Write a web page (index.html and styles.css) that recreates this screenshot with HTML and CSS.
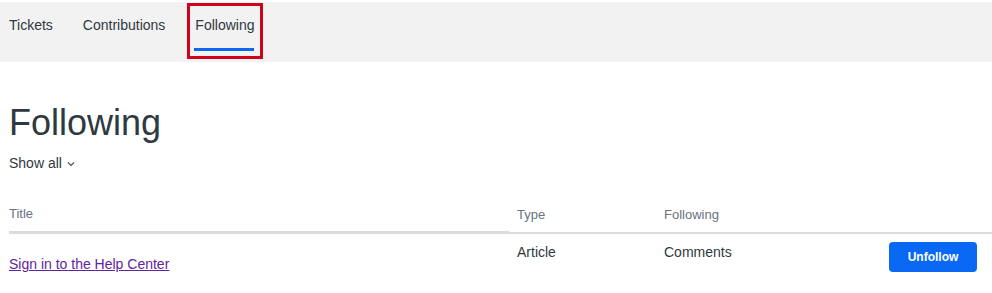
FILE: index.html
```html
<!DOCTYPE html>
<html lang="en">
<head>
  <meta charset="UTF-8" />
  <title>Following</title>
  <link rel="stylesheet" href="styles.css">
</head>
<body>

  <nav class="tabs-bar">
    <a class="tab" href="#">Tickets</a>
    <a class="tab" href="#">Contributions</a>
    <a class="tab tab-current" href="#">Following</a>
  </nav>

  <main class="content">
    <h1 class="page-title">Following</h1>

    <button class="filter-toggle">
      Show all
      <svg class="chevron" width="8" height="6" viewBox="0 0 8 6">
        <polyline points="1,1.5 4,4.5 7,1.5" fill="none" stroke="#49545c" stroke-width="1.2" />
      </svg>
    </button>

    <table class="follow-table">
      <thead>
        <tr>
          <th class="col-title">Title</th>
          <th class="col-type">Type</th>
          <th class="col-following">Following</th>
          <th class="col-action"></th>
        </tr>
      </thead>
      <tbody>
        <tr>
          <td class="col-title"><a href="#">Sign in to the Help Center</a></td>
          <td class="col-type">Article</td>
          <td class="col-following">Comments</td>
          <td class="col-action"><button class="unfollow">Unfollow</button></td>
        </tr>
      </tbody>
    </table>
  </main>

</body>
</html>
```

FILE: styles.css
```css
body {
  margin: 0;
  font-family: 'Liberation Sans', Arial, sans-serif;
  color: #2f3941;
  background: #fff;
}

.tabs-bar {
  display: flex;
  gap: 30px;
  height: 60px;
  margin-top: 2px;
  padding: 0 9px;
  background: #f2f2f2;
}

.tab {
  position: relative;
  padding-top: 13px;
  font-size: 14px;
  line-height: 20px;
  color: #2f3941;
  text-decoration: none;
}

.tab-current::before {
  content: "";
  position: absolute;
  left: -1px;
  right: 0;
  top: 46px;
  height: 3px;
  background: #0969f5;
}

/* highlight box drawn over the current tab */
.tab-current::after {
  content: "";
  position: absolute;
  left: -8px;
  right: -9px;
  top: 1px;
  height: 50px;
  border: 3px solid #d0021b;
}

.content {
  padding: 0 0 0 9px;
}

.page-title {
  margin: 39px 0 0;
  font-size: 36px;
  line-height: 44px;
  font-weight: normal;
}

.filter-toggle {
  display: flex;
  align-items: center;
  gap: 5px;
  margin-top: 8px;
  padding: 0;
  border: none;
  background: none;
  font-family: inherit;
  font-size: 14px;
  line-height: 20px;
  color: #2f3941;
}

.chevron {
  margin-top: 2px;
}

.follow-table {
  width: 100%;
  margin-top: 32px;
  border-collapse: separate;
  border-spacing: 0;
}

.follow-table th {
  padding: 0 0 8px;
  font-size: 13px;
  line-height: 18px;
  font-weight: normal;
  color: #68737d;
  text-align: left;
  border-bottom: 2px solid #dcdcdc;
}

.follow-table th.col-title {
  border-bottom-width: 3px;
}

.follow-table td {
  padding: 8px 0 0;
  font-size: 14px;
  line-height: 20px;
  vertical-align: top;
}

.col-title {
  width: 500px;
}

.follow-table td.col-title {
  padding-top: 20px;
}

.col-type {
  width: 139px;
  padding-left: 8px !important;
}

.col-following {
  width: 140px;
  padding-left: 8px !important;
}

.col-action {
  text-align: right;
  padding-right: 15px !important;
}

.follow-table a {
  color: #5f249f;
}

.unfollow {
  width: 88px;
  height: 30px;
  border: none;
  border-radius: 4px;
  background: #0969f5;
  color: #fff;
  font-family: inherit;
  font-size: 12px;
  font-weight: bold;
  cursor: pointer;
}
```
